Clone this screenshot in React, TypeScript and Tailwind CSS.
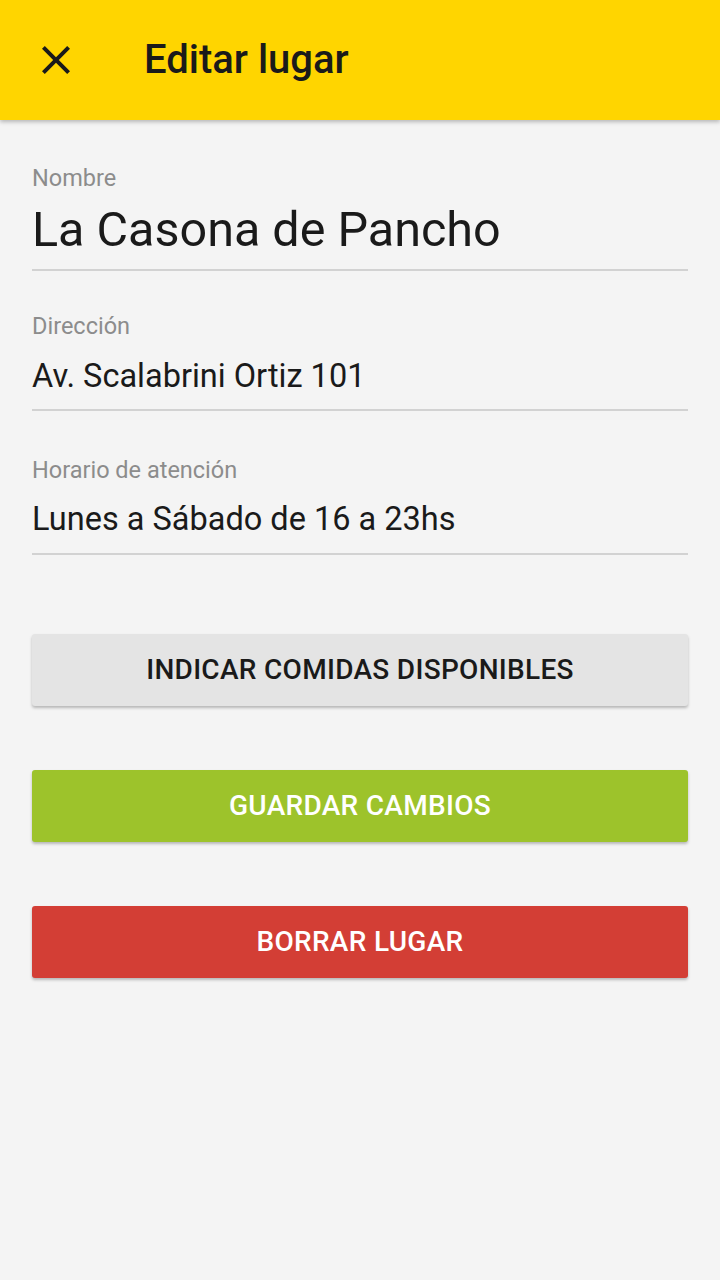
const fields = [
  { label: "Nombre", value: "La Casona de Pancho" },
  { label: "Dirección", value: "Av. Scalabrini Ortiz 101" },
  { label: "Horario de atención", value: "Lunes a Sábado de 16 a 23hs" },
];

function CloseIcon() {
  return (
    <svg width="48" height="48" viewBox="0 0 24 24" fill="#1a1a1a">
      <path d="M19 6.41 17.59 5 12 10.59 6.41 5 5 6.41 10.59 12 5 17.59 6.41 19 12 13.41 17.59 19 19 17.59 13.41 12z" />
    </svg>
  );
}

export default function App() {
  return (
    <div className="min-h-[1280px] w-[720px] bg-[#f4f4f4] font-['Roboto',sans-serif]">
      {/* Toolbar */}
      <header className="relative z-10 flex h-[120px] items-center bg-[#ffd500] shadow-[0_2px_4px_rgba(0,0,0,0.25)]">
        <div className="ml-8 flex h-12 w-12 items-center justify-center">
          <CloseIcon />
        </div>
        <h1 className="ml-16 text-[40px] font-medium leading-none text-[#1a1a1a]">Editar lugar</h1>
      </header>

      <main className="px-8">
        {/* Nombre */}
        <div className="border-b-2 border-[#d2d2d2] pt-[45px] pb-[11px]">
          <div className="text-[23.5px] leading-[26px] text-[#8c8c8c]">{fields[0].label}</div>
          <div className="mt-[11px] text-[48.5px] leading-[56px] text-[#1a1a1a]">{fields[0].value}</div>
        </div>

        {/* Dirección */}
        <div className="border-b-2 border-[#d2d2d2] pt-[42px] pb-[15px]">
          <div className="text-[23.5px] leading-[26px] text-[#8c8c8c]">{fields[1].label}</div>
          <div className="mt-[19px] text-[32.5px] leading-[36px] text-[#1a1a1a]">{fields[1].value}</div>
        </div>

        {/* Horario */}
        <div className="border-b-2 border-[#d2d2d2] pt-[46px] pb-[16px]">
          <div className="text-[23.5px] leading-[26px] text-[#8c8c8c]">{fields[2].label}</div>
          <div className="mt-[18px] text-[32.5px] leading-[36px] text-[#1a1a1a]">{fields[2].value}</div>
        </div>

        <div className="flex flex-col gap-[64px] pt-[79px]">
          <button className="flex h-[72px] items-center justify-center rounded-[3px] bg-[#e4e4e4] text-[28px] font-medium tracking-[0.3px] text-[#1a1a1a] shadow-[0_2px_3px_rgba(0,0,0,0.25)]">
            INDICAR COMIDAS DISPONIBLES
          </button>
          <button className="flex h-[72px] items-center justify-center rounded-[3px] bg-[#9dc32b] text-[28px] font-medium tracking-[0.3px] text-white shadow-[0_2px_3px_rgba(0,0,0,0.25)]">
            GUARDAR CAMBIOS
          </button>
          <button className="flex h-[72px] items-center justify-center rounded-[3px] bg-[#d33e35] text-[28px] font-medium tracking-[0.3px] text-white shadow-[0_2px_3px_rgba(0,0,0,0.25)]">
            BORRAR LUGAR
          </button>
        </div>
      </main>
    </div>
  );
}
